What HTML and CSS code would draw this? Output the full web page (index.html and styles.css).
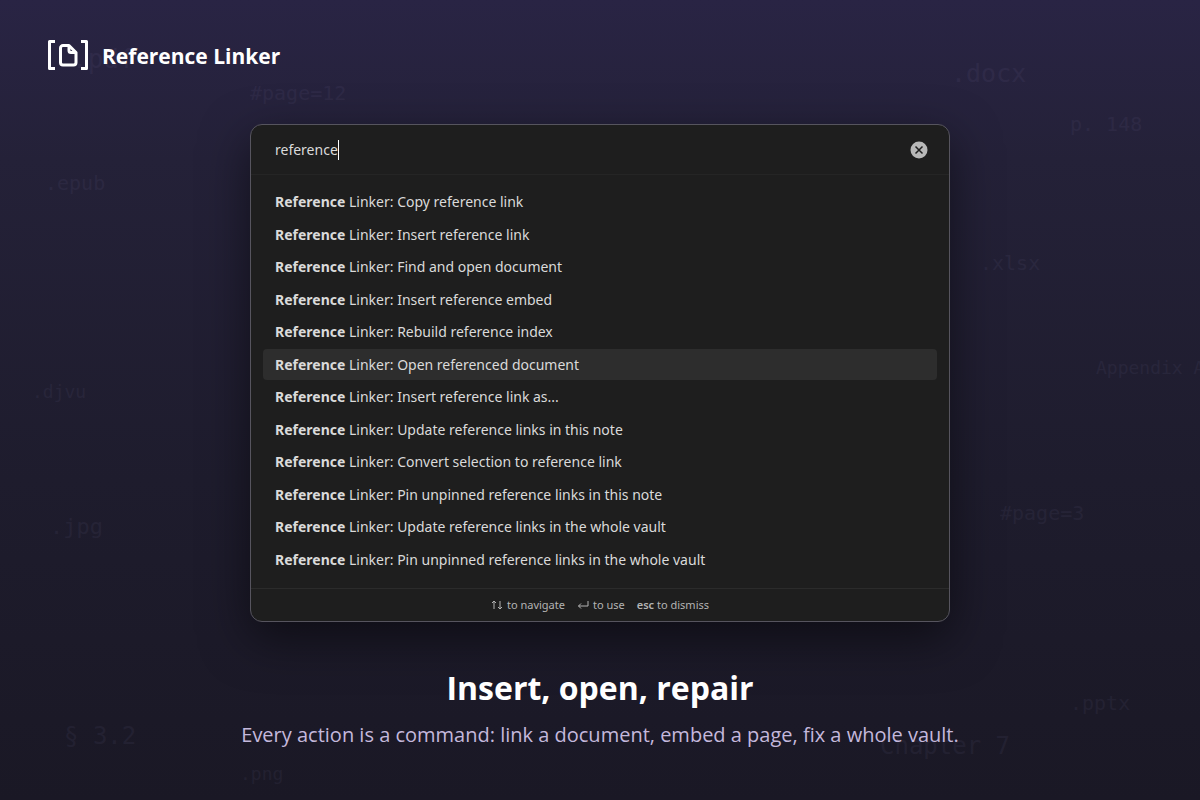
FILE: index.html
```html
<!DOCTYPE html>
<html lang="en">
<head>
<meta charset="utf-8">
<title>Reference Linker</title>
<link rel="stylesheet" href="styles.css">
<script src="scatter.js" defer></script>
</head>
<body>
<div class="scatter" aria-hidden="true"></div>
<header class="brand">
  <svg class="logo" viewBox="0 0 42 32" aria-hidden="true">
    <path d="M8 1.500H2.500v27H8M34 1.500h5.500v27H34"/>
    <path d="M22 5.500h-6a2.500 2.500 0 0 0-2.500 2.500v14.500a2.500 2.500 0 0 0 2.500 2.500h10.500a2.500 2.500 0 0 0 2.500-2.500V12.500z"/>
    <path d="M22 6v4.500a2 2 0 0 0 2 2h4.500"/>
  </svg>
  <span>Reference Linker</span>
</header>
<main class="stage">
  <section class="palette" aria-label="Command palette">
    <div class="search">
      <input class="query" type="text" value="reference" aria-label="Command"><span class="caret"></span>
      <button class="clear" type="button" aria-label="Clear">
        <svg viewBox="0 0 18 18" aria-hidden="true"><circle cx="9" cy="9" r="8.500"/><path d="M5.500 5.500l7 7M12.500 5.500l-7 7"/></svg>
      </button>
    </div>
    <ul class="commands">
      <li><b>Reference</b> Linker: Copy reference link</li>
      <li><b>Reference</b> Linker: Insert reference link</li>
      <li><b>Reference</b> Linker: Find and open document</li>
      <li><b>Reference</b> Linker: Insert reference embed</li>
      <li><b>Reference</b> Linker: Rebuild reference index</li>
      <li class="selected"><b>Reference</b> Linker: Open referenced document</li>
      <li><b>Reference</b> Linker: Insert reference link as...</li>
      <li><b>Reference</b> Linker: Update reference links in this note</li>
      <li><b>Reference</b> Linker: Convert selection to reference link</li>
      <li><b>Reference</b> Linker: Pin unpinned reference links in this note</li>
      <li><b>Reference</b> Linker: Update reference links in the whole vault</li>
      <li><b>Reference</b> Linker: Pin unpinned reference links in the whole vault</li>
    </ul>
    <div class="hints">
      <span><svg viewBox="0 0 12 10" aria-hidden="true"><path d="M3 9V1M1 3l2-2 2 2M9 1v8M7 7l2 2 2-2"/></svg>to navigate</span>
      <span><svg viewBox="0 0 12 10" aria-hidden="true"><path d="M11 1v5H1.500M4 3.500L1.500 6 4 8.500"/></svg>to use</span>
      <span><b>esc</b> to dismiss</span>
    </div>
  </section>
  <h1>Insert, open, repair</h1>
  <p class="tagline">Every action is a command: link a document, embed a page, fix a whole vault.</p>
</main>
</body>
</html>
```

FILE: styles.css
```css
* { box-sizing: border-box; }
body {
  position: relative;
  margin: 0;
  min-height: 100vh;
  overflow: hidden;
  background: linear-gradient(180deg, #292444 0%, #242138 20%, #1e1c2d 60%, #1a1825 100%);
  color: #dadada;
  font-family: "Noto Sans", sans-serif;
}
.scatter {
  position: absolute;
  inset: 0;
  overflow: hidden;
  color: #a8a0d8;
  font-family: "DejaVu Sans Mono", monospace;
  line-height: 1;
  white-space: pre;
}
.scatter span { position: absolute; opacity: 0.06; }
.brand {
  position: relative;
  display: flex;
  align-items: center;
  gap: 13px;
  height: 112px;
  padding-left: 47px;
  color: #fff;
  font-family: "Open Sans", sans-serif;
  font-size: 21px;
  font-weight: 700;
}
.logo {
  width: 42px;
  height: 32px;
  fill: none;
  stroke: #fff;
  stroke-width: 3;
  stroke-linejoin: round;
}
.stage {
  position: relative;
  display: flex;
  flex-direction: column;
  align-items: center;
  padding-top: 12px;
}
.palette {
  width: 700px;
  max-width: 100%;
  border: 1px solid #56545e;
  border-radius: 12px;
  background: #1e1e1e;
  box-shadow: 0 16px 48px rgba(0, 0, 0, 0.5);
}
.search {
  display: flex;
  align-items: center;
  height: 50px;
  padding: 0 21px 0 24px;
  border-bottom: 1px solid #252525;
}
.query {
  field-sizing: content;
  padding: 0;
  border: 0;
  outline: 0;
  background: none;
  color: inherit;
  font: 14px/20px "Noto Sans", sans-serif;
}
.caret { width: 1px; height: 20px; background: #fff; }
.clear {
  width: 18px;
  height: 18px;
  margin-left: auto;
  padding: 0;
  border: 0;
  background: none;
}
.clear svg { display: block; fill: #b8b8b8; }
.clear path { stroke: #1e1e1e; stroke-width: 1.5; }
.commands {
  display: grid;
  grid-auto-rows: 1fr;
  row-gap: 1px;
  height: 413px;
  margin: 0;
  padding: 11px 12px 13px;
  list-style: none;
  font-size: 14px;
}
.commands li {
  display: flex;
  align-items: center;
  padding: 0 12px;
  border-radius: 4px;
  white-space: pre;
}
.selected { background: #2d2d2d; }
.hints {
  display: flex;
  justify-content: center;
  gap: 12px;
  border-top: 1px solid #2b2b2b;
  color: #b3b3b3;
  font-size: 11px;
  line-height: 32px;
}
.hints svg {
  width: 12px;
  height: 10px;
  margin-right: 4px;
  vertical-align: -1px;
  fill: none;
  stroke: currentColor;
}
.hints b { font-weight: 600; }
h1 {
  margin: 42px 0 0;
  color: #fff;
  font-family: "Open Sans", sans-serif;
  font-size: 32px;
  line-height: 48px;
}
.tagline {
  margin: 8px 0 0;
  color: #c4b8dc;
  font-family: "Open Sans", sans-serif;
  font-size: 20px;
  line-height: 30px;
}
```

FILE: scatter.js
```js
const fragments = [
  [".pdf", 72, 46, 26], ["#page=12", 250, 83, 20], [".docx", 951, 61, 25],
  ["p. 148", 1070, 114, 20], [".epub", 45, 173, 20], [".xlsx", 980, 253, 20],
  ["Appendix A", 1096, 359, 18], [".djvu", 32, 383, 18], ["#page=3", 1000, 503, 20],
  [".jpg", 50, 516, 22], [".pptx", 1070, 693, 20], ["§ 3.2", 64, 724, 24],
  ["Chapter 7", 880, 734, 24], [".png", 240, 765, 18]
];
const scatter = document.querySelector(".scatter");
for (const [text, x, y, size] of fragments) {
  const item = document.createElement("span");
  item.textContent = text;
  item.style.left = x + "px";
  item.style.top = y + "px";
  item.style.fontSize = size + "px";
  scatter.append(item);
}
```
